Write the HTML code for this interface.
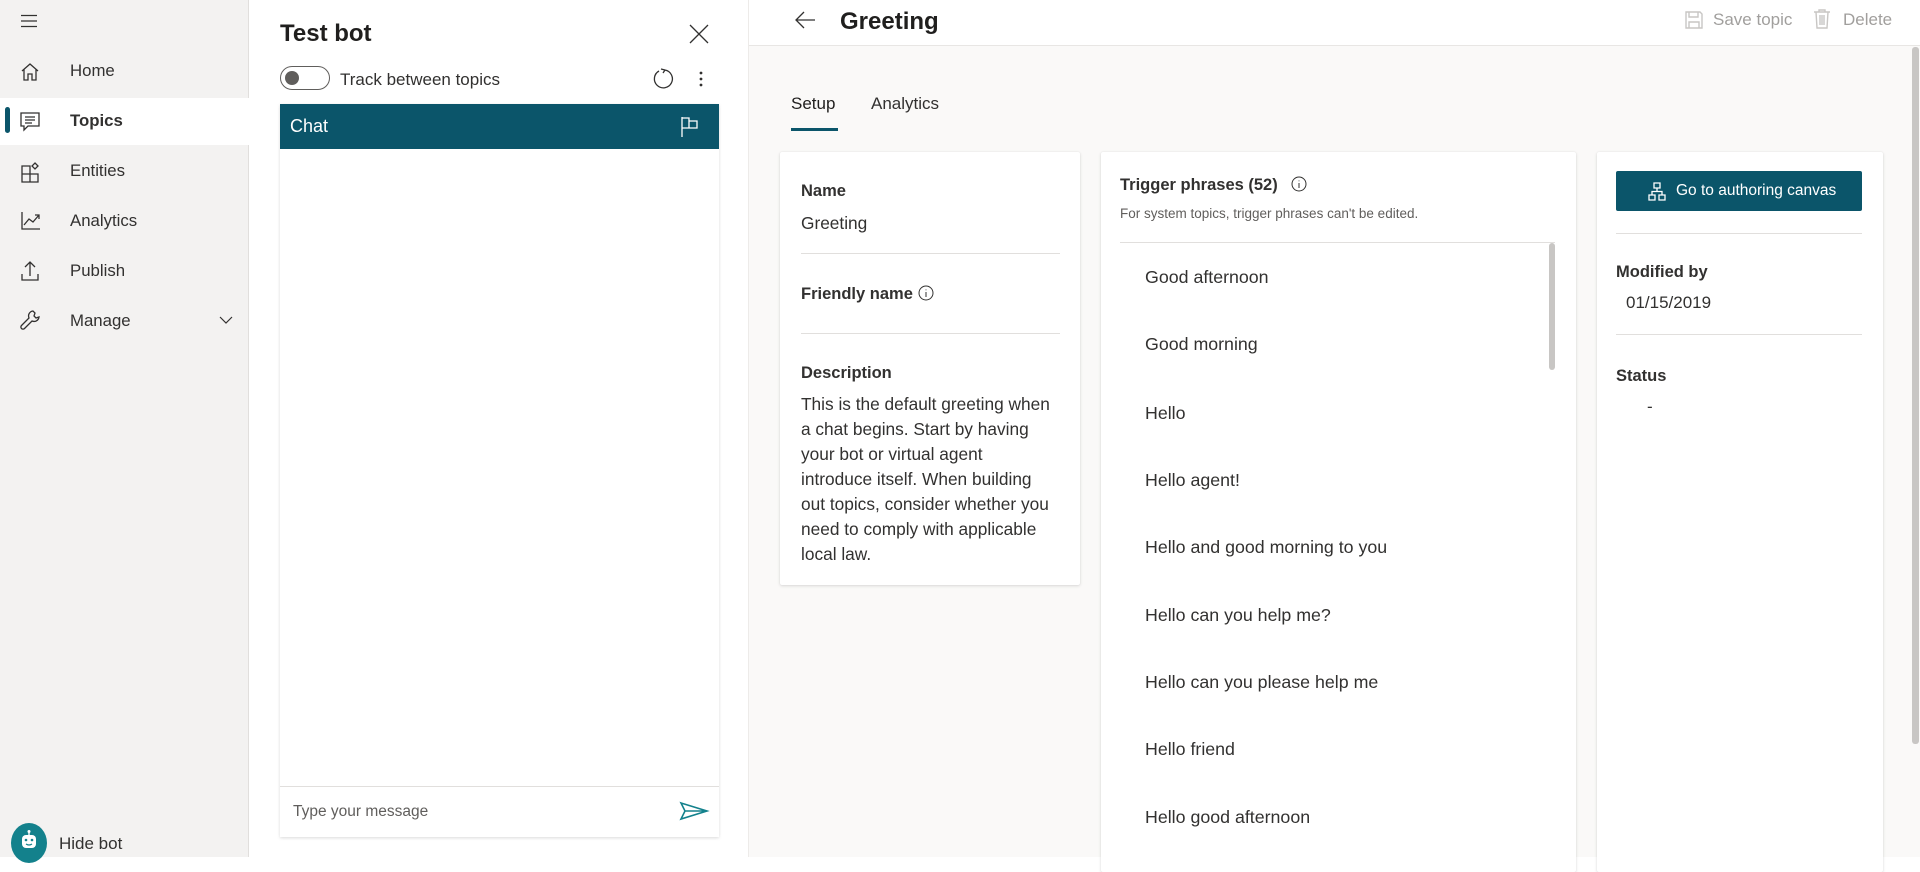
<!DOCTYPE html>
<html><head><meta charset="utf-8"><style>
*{margin:0;padding:0;box-sizing:border-box}
body{width:1920px;height:857px;overflow:hidden;font-family:"Liberation Sans",sans-serif;color:#323130;background:#fff;position:relative}
.a{position:absolute;white-space:nowrap}
.side{left:0;top:0;width:249px;height:857px;background:#f3f2f1;border-right:1px solid #e1dfdd}
.nav{font-size:16.8px;color:#323130}
.lbl{font-size:16.5px;font-weight:bold;color:#323130}
.card{background:#fff;box-shadow:0 1px 3px rgba(0,0,0,.13),0 0 1px rgba(0,0,0,.1);border-radius:2px}
.div{height:1px;background:#e1dfdd}
.ph{font-size:17.8px;color:#323130}
svg{position:absolute;overflow:visible}
</style></head><body>
<div class="a side"></div>
<svg style="left:21px;top:14px" width="16" height="14"><path d="M0 1.5h16M0 7h16M0 12.5h16" stroke="#323130" stroke-width="1.2"/></svg>
<svg style="left:21px;top:63px" width="18" height="18" fill="none" stroke="#323130" stroke-width="1.3"><path d="M1 8L9 1l8 7M3 6.5V17h4v-6h4v6h4V6.5"/></svg>
<div class="a nav" style="left:70px;top:61px">Home</div>
<div class="a" style="left:0;top:98px;width:249px;height:47px;background:#fff"></div>
<div class="a" style="left:5px;top:107px;width:5px;height:26px;background:#0b556a;border-radius:3px"></div>
<svg style="left:20px;top:112px" width="20" height="20" fill="none" stroke="#323130" stroke-width="1.3"><path d="M1 1h18v13H8l-4 4v-4H1z M5 5h10M5 8h10M5 11h7"/></svg>
<div class="a nav" style="left:70px;top:111px;font-weight:bold">Topics</div>
<svg style="left:21px;top:162px" width="20" height="20" fill="none" stroke="#323130" stroke-width="1.3"><path d="M1 4h8v16H1zM1 12h16v8H9M14 1l3 3-3 3-3-3z"/></svg>
<div class="a nav" style="left:70px;top:161px">Entities</div>
<svg style="left:21px;top:212px" width="20" height="18" fill="none" stroke="#323130" stroke-width="1.3"><path d="M1 0v17h18M3 13l5-6 4 3 6-7M14 3h4v4"/></svg>
<div class="a nav" style="left:70px;top:211px">Analytics</div>
<svg style="left:21px;top:261px" width="18" height="20" fill="none" stroke="#323130" stroke-width="1.3"><path d="M9 15V1M4 6l5-5 5 5M1 13v6h16v-6"/></svg>
<div class="a nav" style="left:70px;top:261px">Publish</div>
<svg style="left:20px;top:310px" width="20" height="20" fill="none" stroke="#323130" stroke-width="1.3"><path d="M13 1a5 5 0 0 0-4 7L1.5 15.5a2 2 0 0 0 3 3L12 11a5 5 0 0 0 7-4l-3 1-2-2 1-3z"/></svg>
<div class="a nav" style="left:70px;top:311px">Manage</div>
<svg style="left:219px;top:316px" width="14" height="8" fill="none" stroke="#323130" stroke-width="1.2"><path d="M1 1l6 6 6-6"/></svg>
<div class="a" style="left:11px;top:823px;width:36px;height:40px;border-radius:50%;background:#13818c"></div>
<svg style="left:20px;top:830px" width="18" height="20"><circle cx="9" cy="1.5" r="1.5" fill="#fff"/><rect x="8.3" y="2" width="1.4" height="3" fill="#fff"/><rect x="2" y="5" width="14" height="13" rx="4" fill="#fff"/><circle cx="6" cy="10" r="1.3" fill="#13818c"/><circle cx="12" cy="10" r="1.3" fill="#13818c"/><path d="M6 14q3 2 6 0" stroke="#13818c" fill="none" stroke-width="1.2"/></svg>
<div class="a" style="left:59px;top:834px;font-size:17px">Hide bot</div>

<div class="a" style="left:748px;top:0;width:1px;height:857px;background:#edebe9"></div>
<div class="a" style="left:280px;top:20px;font-size:24px;font-weight:bold;color:#201f1e">Test bot</div>
<svg style="left:689px;top:24px" width="20" height="20"><path d="M1 1l18 18M19 1L1 19" stroke="#323130" stroke-width="1.3"/></svg>
<div class="a" style="left:280px;top:66px;width:50px;height:24px;border:1.3px solid #605e5c;border-radius:12px"></div>
<div class="a" style="left:285px;top:71px;width:14px;height:14px;border-radius:50%;background:#605e5c"></div>
<div class="a" style="left:340px;top:70px;font-size:17px">Track between topics</div>
<svg style="left:653px;top:68px" width="20" height="22" fill="none" stroke="#323130" stroke-width="1.3"><path d="M6 3A9 9 0 1 0 12 2M12 2L8 1M12 2l-2 3"/></svg>
<svg style="left:699px;top:71px" width="4" height="16" fill="#323130"><circle cx="2" cy="2" r="1.4"/><circle cx="2" cy="8" r="1.4"/><circle cx="2" cy="14" r="1.4"/></svg>
<div class="a" style="left:280px;top:104px;width:439px;height:733px;background:#fff;box-shadow:0 1px 3px rgba(0,0,0,.15)"></div>
<div class="a" style="left:280px;top:104px;width:439px;height:45px;background:#0b556a"></div>
<div class="a" style="left:290px;top:116px;font-size:18px;color:#fff">Chat</div>
<svg style="left:681px;top:117px" width="18" height="20" fill="none" stroke="#fff" stroke-width="1.3"><path d="M1 0v20M1 1h7v10H1M8 4h8v7H8"/></svg>
<div class="a div" style="left:280px;top:786px;width:439px"></div>
<div class="a" style="left:293px;top:803px;font-size:15.5px;color:#605e5c">Type your message</div>
<svg style="left:680px;top:802px" width="28" height="18" fill="none" stroke="#13818c" stroke-width="1.6"><path d="M1 1l26 8-26 8 4-8zM5 9h22"/></svg>

<div class="a" style="left:749px;top:45px;width:1171px;height:812px;background:#faf9f8;border-top:1px solid #e8e6e4"></div>
<svg style="left:795px;top:11px" width="20" height="18" fill="none" stroke="#323130" stroke-width="1.3"><path d="M20 9H2M9 1L1 9l8 8"/></svg>
<div class="a" style="left:840px;top:8px;font-size:24px;font-weight:bold;color:#201f1e">Greeting</div>
<svg style="left:1685px;top:11px" width="18" height="18" fill="none" stroke="#c8c6c4" stroke-width="1.4"><path d="M1 1h14l2 2v14H1zM4 1v5h9V1M4 17v-6h10v6"/></svg>
<div class="a" style="left:1713px;top:10px;font-size:17px;color:#a19f9d">Save topic</div>
<svg style="left:1814px;top:9px" width="16" height="20" fill="none" stroke="#c8c6c4" stroke-width="1.4"><path d="M0 3h16M5 3V1h6v2M2 3l1 16h10l1-16M6 6v10M8 6v10M10 6v10"/></svg>
<div class="a" style="left:1843px;top:10px;font-size:17px;color:#a19f9d">Delete</div>
<div class="a" style="left:1912px;top:47px;width:7px;height:697px;background:#c8c6c4;border-radius:3px"></div>

<div class="a" style="left:791px;top:94px;font-size:17px;color:#201f1e">Setup</div>
<div class="a" style="left:871px;top:94px;font-size:17px;color:#323130">Analytics</div>
<div class="a" style="left:791px;top:128px;width:47px;height:3px;background:#0b556a"></div>

<div class="a card" style="left:780px;top:152px;width:300px;height:433px"></div>
<div class="a lbl" style="left:801px;top:182px">Name</div>
<div class="a" style="left:801px;top:213px;font-size:17.3px">Greeting</div>
<div class="a div" style="left:801px;top:253px;width:259px"></div>
<div class="a lbl" style="left:801px;top:285px">Friendly name</div>
<svg style="left:918px;top:285px" width="16" height="16" fill="none" stroke="#323130" stroke-width="1"><circle cx="8" cy="8" r="7"/><path d="M8 7v5M8 4.5v.8"/></svg>
<div class="a div" style="left:801px;top:333px;width:259px"></div>
<div class="a lbl" style="left:801px;top:364px">Description</div>
<div class="a" style="left:801px;top:392px;font-size:17.3px;line-height:25px">This is the default greeting when<br>a chat begins. Start by having<br>your bot or virtual agent<br>introduce itself. When building<br>out topics, consider whether you<br>need to comply with applicable<br>local law.</div>

<div class="a card" style="left:1101px;top:152px;width:475px;height:720px"></div>
<div class="a lbl" style="left:1120px;top:176px">Trigger phrases (52)</div>
<svg style="left:1291px;top:176px" width="16" height="16" fill="none" stroke="#323130" stroke-width="1"><circle cx="8" cy="8" r="7"/><path d="M8 7v5M8 4.5v.8"/></svg>
<div class="a" style="left:1120px;top:206px;font-size:13.5px;color:#605e5c">For system topics, trigger phrases can't be edited.</div>
<div class="a div" style="left:1120px;top:242px;width:435px"></div>
<div class="a" style="left:1549px;top:243px;width:6px;height:127px;background:#c8c6c4;border-radius:3px"></div>
<div class="a ph" style="left:1145px;top:267px">Good afternoon</div>
<div class="a ph" style="left:1145px;top:334px">Good morning</div>
<div class="a ph" style="left:1145px;top:403px">Hello</div>
<div class="a ph" style="left:1145px;top:470px">Hello agent!</div>
<div class="a ph" style="left:1145px;top:537px">Hello and good morning to you</div>
<div class="a ph" style="left:1145px;top:605px">Hello can you help me?</div>
<div class="a ph" style="left:1145px;top:672px">Hello can you please help me</div>
<div class="a ph" style="left:1145px;top:739px">Hello friend</div>
<div class="a ph" style="left:1145px;top:807px">Hello good afternoon</div>

<div class="a card" style="left:1597px;top:152px;width:286px;height:720px"></div>
<div class="a" style="left:1616px;top:171px;width:246px;height:40px;background:#0b556a;border-radius:2px"></div>
<svg style="left:1648px;top:182px" width="18" height="18" fill="none" stroke="#fff" stroke-width="1.3"><path d="M6 1h6v5H6zM1 13h6v5H1zM11 13h6v5h-6zM9 6v3.5M4 13V9.5h10V13"/></svg>
<div class="a" style="left:1676px;top:182px;font-size:15.5px;color:#fff">Go to authoring canvas</div>
<div class="a div" style="left:1616px;top:233px;width:246px"></div>
<div class="a lbl" style="left:1616px;top:263px">Modified by</div>
<div class="a" style="left:1626px;top:293px;font-size:17px">01/15/2019</div>
<div class="a div" style="left:1616px;top:334px;width:246px"></div>
<div class="a lbl" style="left:1616px;top:367px">Status</div>
<div class="a" style="left:1647px;top:397px;font-size:17px">-</div>
</body></html>
